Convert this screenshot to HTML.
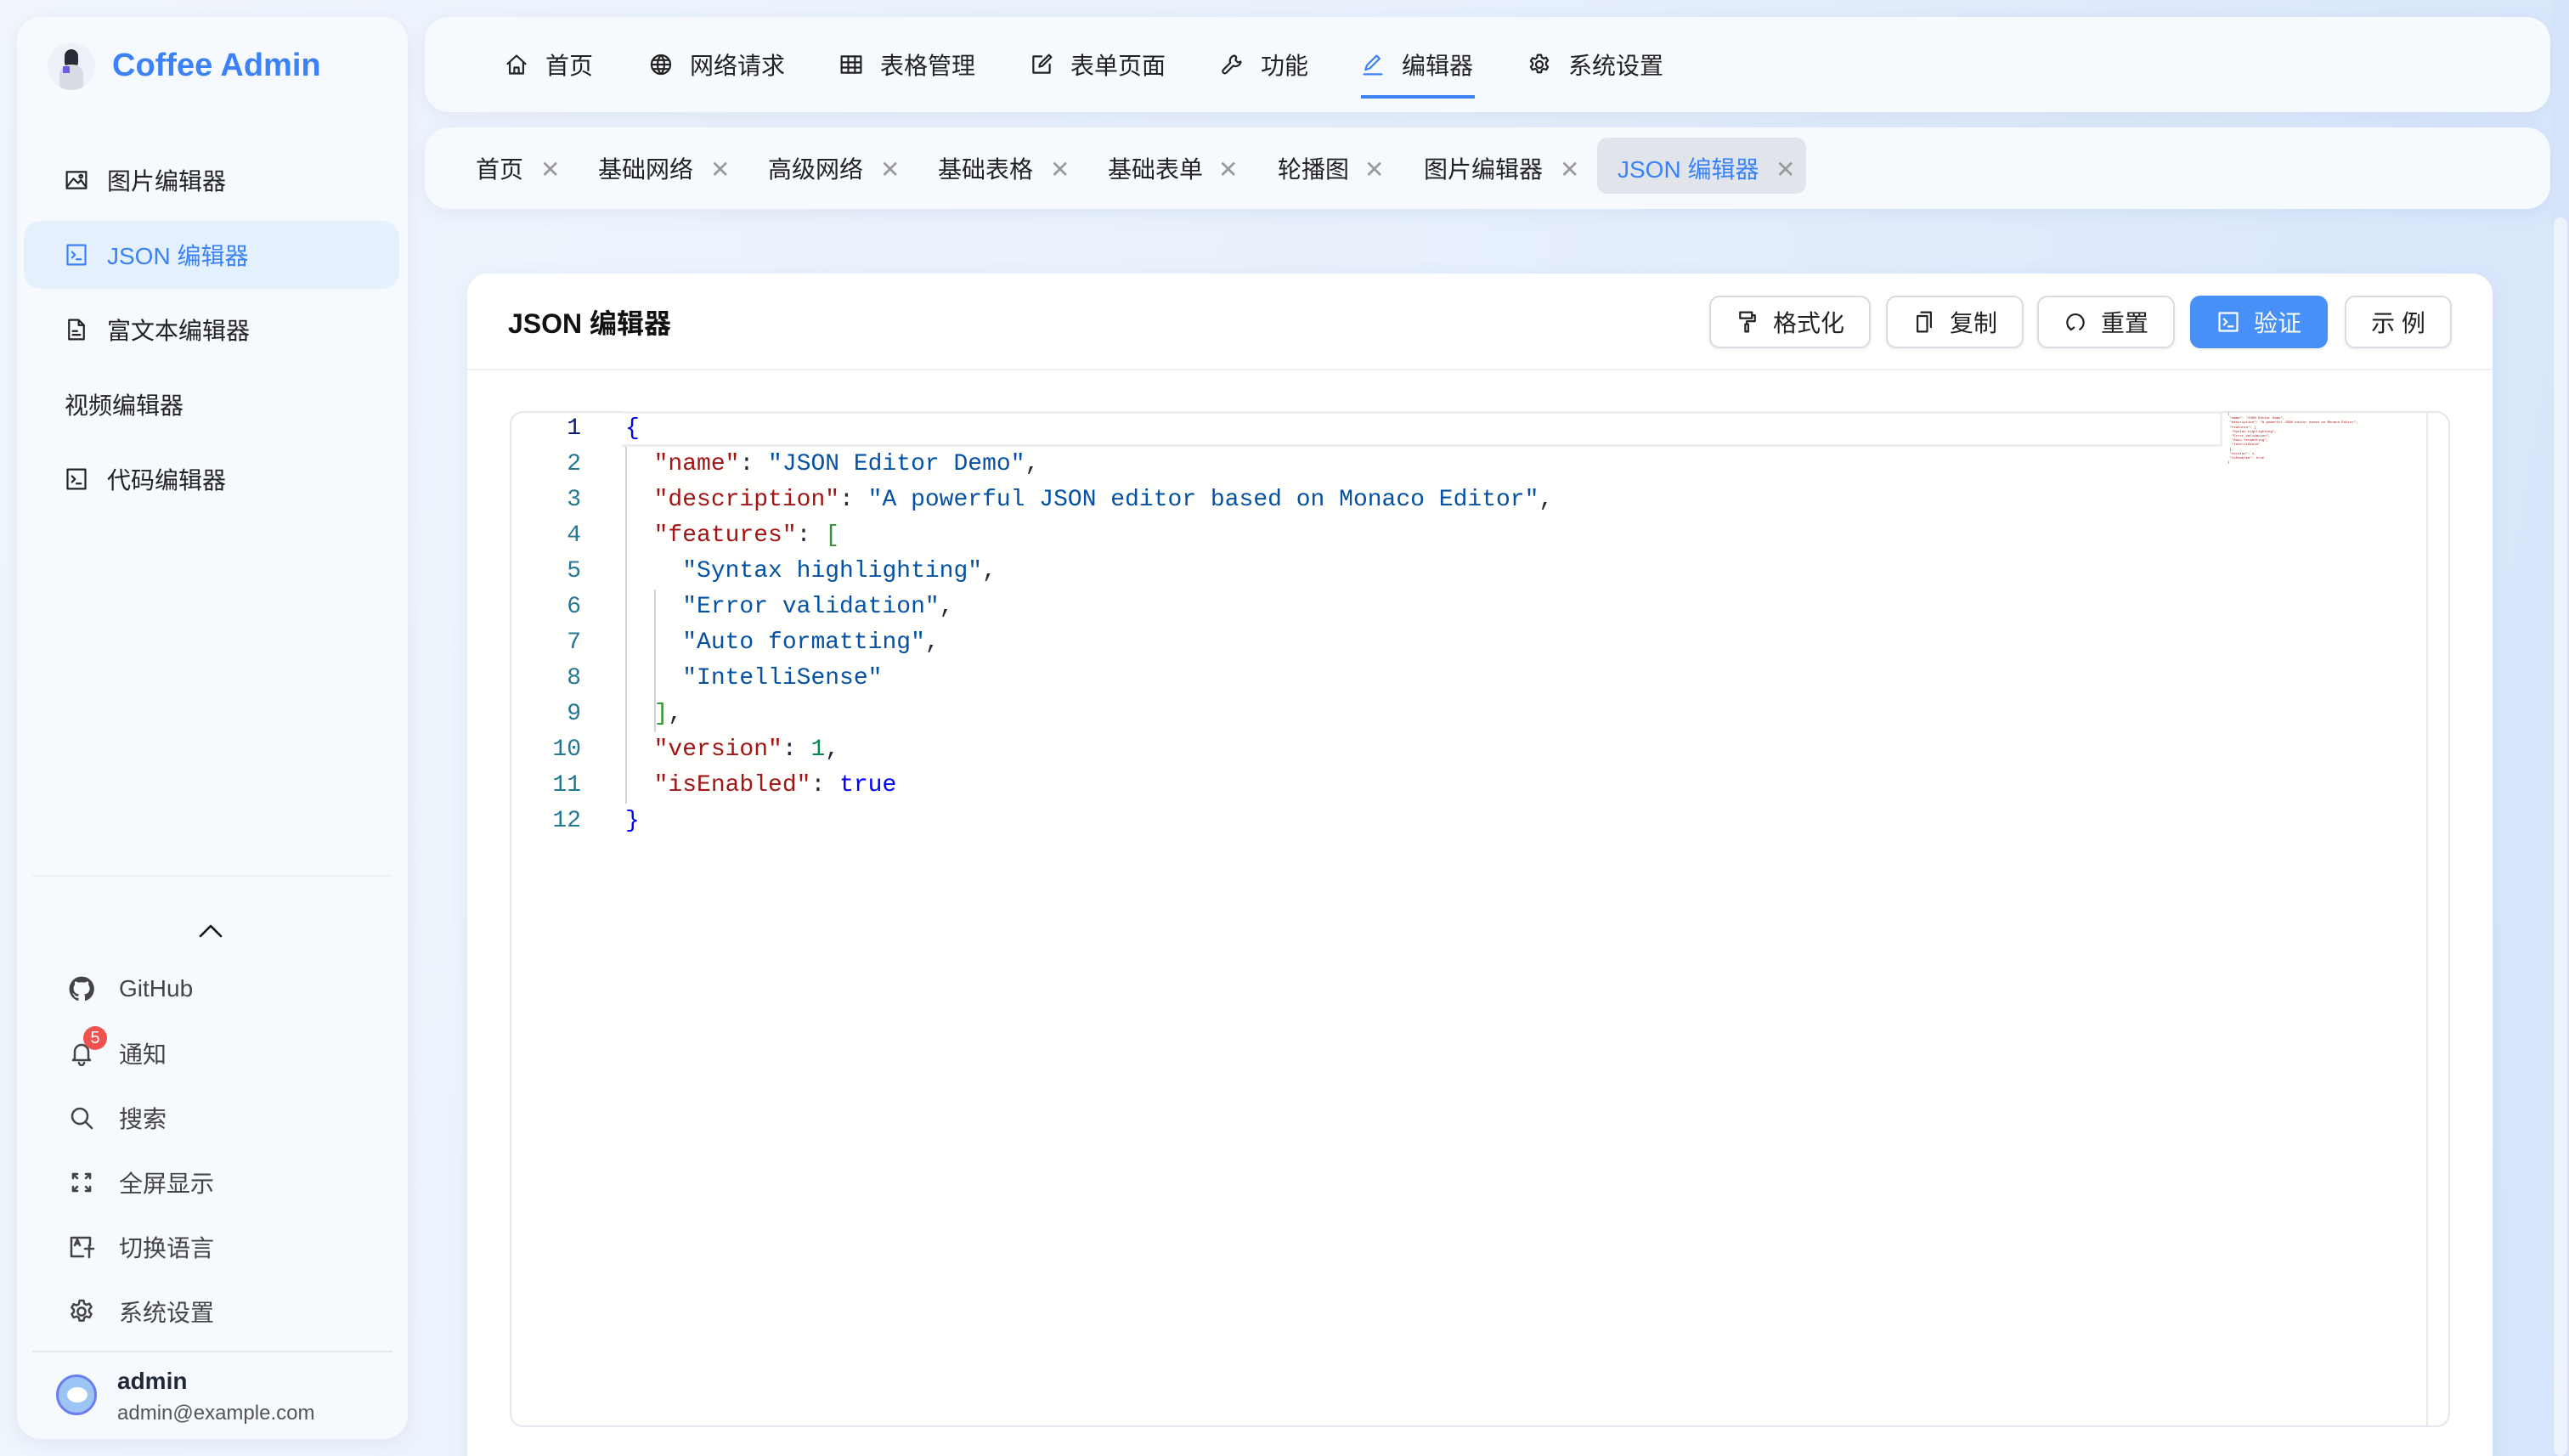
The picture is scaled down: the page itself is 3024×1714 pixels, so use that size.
<!DOCTYPE html>
<html><head><meta charset="utf-8"><style>
*{box-sizing:border-box;margin:0;padding:0}
html,body{width:3024px;height:1714px;overflow:hidden}
body{font-family:"Liberation Sans","Noto Sans CJK SC",sans-serif;color:#1f2937}
#w{zoom:2;width:1512px;height:857px;position:relative;overflow:hidden;background:linear-gradient(100deg,#f1f6fd 0%,#e8f0fc 50%,#d6e5fb 100%)}
.a{position:absolute}
.card{background:#f6f9fe;border-radius:14px;box-shadow:0 2px 10px rgba(100,130,180,.12)}
.mi{position:absolute;left:38px;font-size:14px;display:flex;align-items:center;height:20px;color:#222}
.mi svg{width:14px;height:14px;margin-right:11px}
.bi{position:absolute;left:40px;font-size:14px;display:flex;align-items:center;height:20px;color:#444}
.bi svg{width:16px;height:16px;margin-right:14px}
.nv{position:absolute;top:28px;font-size:14px;display:flex;align-items:center;height:20px;color:#222}
.nv svg{width:14px;height:14px;margin-right:10px}
.tb{position:absolute;top:90px;font-size:14px;height:20px;line-height:20px;color:#222}
.x{position:absolute;top:90px;font-size:14px;color:#999;height:20px;line-height:20px}
.btn{position:absolute;top:174px;height:31px;border:1px solid #d8dce2;border-radius:6px;background:#fff;font-size:14px;display:flex;align-items:center;justify-content:center;color:#222;box-shadow:0 1px 2px rgba(0,0,0,.06)}
.btn svg{width:14px;height:14px;margin-right:8px}
.code{position:absolute;left:368px;font-family:"Liberation Mono",monospace;font-size:14px;white-space:pre;line-height:21px}
.ln{position:absolute;left:300px;width:42px;text-align:right;font-family:"Liberation Mono",monospace;font-size:14px;line-height:21px;color:#237893}
.k{color:#a31515}.s{color:#0451a5}.n{color:#098658}.b{color:#0000ff}.g{color:#319331}
svg{fill:none;stroke:currentColor;stroke-width:1.25;stroke-linecap:round;stroke-linejoin:round}
</style></head><body><div id="w">

<div class="a card" style="left:10px;top:10px;width:230px;height:837px"></div>
<div class="a" style="left:28px;top:25px;width:28px;height:28px;border-radius:50%;background:#eef2f8;overflow:hidden">
 <div class="a" style="left:10px;top:4px;width:8px;height:10px;border-radius:4px 4px 2px 2px;background:#2b2b3a"></div>
 <div class="a" style="left:7px;top:13px;width:14px;height:15px;border-radius:6px 6px 0 0;background:#d8dbe3"></div>
 <div class="a" style="left:9px;top:14px;width:4px;height:4px;background:#6b5ce7"></div>
</div>
<div class="a" style="left:66px;top:28px;font-size:19px;font-weight:bold;color:#3b82f6">Coffee Admin</div>

<div class="a" style="left:14px;top:130px;width:221px;height:40px;border-radius:10px;background:#e5f0fd"></div>
<div class="mi" style="top:96px"><svg viewBox="0 0 16 16"><rect x="1.5" y="2.5" width="13" height="11"/><path d="M2 12l4-5 3 3 2-2 3 4"/><circle cx="11" cy="5.5" r="1"/></svg>图片编辑器</div>
<div class="mi" style="top:140px;color:#3b82f6"><svg viewBox="0 0 16 16"><rect x="2" y="1.5" width="12" height="13"/><path d="M5 6l2 2-2 2M8 11h3"/></svg>JSON 编辑器</div>
<div class="mi" style="top:184px"><svg viewBox="0 0 16 16"><path d="M3 1.5h6.5l3.5 3.5v9.5H3z M9.5 1.5V5H13 M5.5 9h3M5.5 11.5h5"/></svg>富文本编辑器</div>
<div class="mi" style="top:228px">视频编辑器</div>
<div class="mi" style="top:272px"><svg viewBox="0 0 16 16"><rect x="2" y="1.5" width="12" height="13"/><path d="M5 6l2 2-2 2M8 11h3"/></svg>代码编辑器</div>

<div class="a" style="left:19px;top:515px;width:212px;height:1px;background:#edf0f5"></div>
<svg class="a" style="left:117px;top:543px;width:14px;height:9px;stroke:#111;stroke-width:1.3" viewBox="0 0 14 9"><path d="M1 8l6-6 6 6"/></svg>

<div class="bi" style="top:572px"><svg viewBox="0 0 16 16" style="fill:#444;stroke:none"><path d="M8 .8a7.3 7.3 0 00-2.3 14.2c.4.1.5-.2.5-.4v-1.3c-2 .4-2.5-1-2.5-1-.3-.9-.8-1.1-.8-1.1-.7-.4 0-.4 0-.4.7 0 1.1.8 1.1.8.7 1.1 1.7.8 2.1.6.1-.5.3-.8.5-1-1.6-.2-3.3-.8-3.3-3.6 0-.8.3-1.4.8-1.9-.1-.2-.3-1 .1-2 0 0 .6-.2 2 .7a7 7 0 013.7 0c1.4-.9 2-.7 2-.7.4 1 .2 1.8.1 2 .5.5.8 1.1.8 1.900 0 2.8-1.7 3.4-3.3 3.6.3.2.5.7.5 1.4v2c0 .2.1.5.5.4A7.3 7.3 0 008 .8z"/></svg>GitHub</div>
<div class="bi" style="top:610px"><svg viewBox="0 0 16 16"><path d="M4 11V7a4 4 0 018 0v4l1 1H3zM6.5 13.5a1.5 1.5 0 003 0"/></svg>通知</div>
<div class="a" style="left:49px;top:604px;width:14px;height:14px;border-radius:50%;background:#ef5350;color:#fff;font-size:10px;text-align:center;line-height:14px">5</div>
<div class="bi" style="top:648px"><svg viewBox="0 0 16 16"><circle cx="7" cy="7" r="4.5"/><path d="M10.5 10.5l3.5 3.5"/></svg>搜索</div>
<div class="bi" style="top:686px"><svg viewBox="0 0 16 16"><path d="M3 3l2.5 2.5M3 5.5V3h2.5M13 3l-2.5 2.5M13 5.5V3h-2.5M3 13l2.5-2.5M3 10.5V13h2.5M13 13l-2.5-2.5M13 10.5V13h-2.5"/></svg>全屏显示</div>
<div class="bi" style="top:724px"><svg viewBox="0 0 16 16"><path d="M13 7V2.5H2v11h7M4 7l1.5-3.5L7 7M4.5 6h2M10 9h5M12.5 7v7"/></svg>切换语言</div>
<div class="bi" style="top:762px"><svg viewBox="0 0 16 16"><circle cx="8" cy="8" r="2.3"/><path d="M6.8 1.5h2.4l.4 1.8 1.3.7 1.7-.7 1.2 2-1.3 1.3v1.6l1.3 1.3-1.2 2-1.7-.7-1.3.7-.4 1.8H6.8l-.4-1.8-1.3-.7-1.7.7-1.2-2 1.3-1.3V6.9L2.2 5.6l1.2-2 1.7.7 1.3-.7z"/></svg>系统设置</div>

<div class="a" style="left:19px;top:795px;width:212px;height:1px;background:#e3e7ee"></div>
<div class="a" style="left:33px;top:809px;width:24px;height:24px;border-radius:50%;background:#9cc4f5;border:1.5px solid #6b7ef0">
 <div class="a" style="left:5px;top:6px;width:12px;height:9px;border-radius:50%;background:#fff"></div></div>
<div class="a" style="left:69px;top:805px;font-size:14px;font-weight:bold;color:#1f2937">admin</div>
<div class="a" style="left:69px;top:825px;font-size:12px;color:#555">admin@example.com</div>

<div class="a card" style="left:250px;top:10px;width:1251px;height:56px"></div>
<div class="nv" style="left:297px"><svg viewBox="0 0 16 16"><path d="M2 7.5L8 2l6 5.5M3.5 6.5V14h9V6.5M6.5 14v-4h3v4"/></svg>首页</div>
<div class="nv" style="left:382px"><svg viewBox="0 0 16 16"><circle cx="8" cy="8" r="6.3"/><path d="M1.7 8h12.6M8 1.7c-3 3-3 9.6 0 12.6M8 1.7c3 3 3 9.6 0 12.6M2.5 5h11M2.5 11h11"/></svg>网络请求</div>
<div class="nv" style="left:494px"><svg viewBox="0 0 16 16"><rect x="1.5" y="2.5" width="13" height="11"/><path d="M1.5 6.5h13M1.5 10h13M6 2.5v11M10.5 2.5v11"/></svg>表格管理</div>
<div class="nv" style="left:606px"><svg viewBox="0 0 16 16"><path d="M8 2.5H2.5v11h11V8M6.5 9.5l.5-2 6-6 1.5 1.5-6 6z"/></svg>表单页面</div>
<div class="nv" style="left:718px"><svg viewBox="0 0 16 16"><path d="M10 2a3.5 3.5 0 00-3 4.8L2.3 11.5a1.3 1.3 0 002 2L9 8.8A3.5 3.5 0 0014 6l-2 .5-1.5-1.5.5-2z"/></svg>功能</div>
<div class="nv" style="left:801px;color:#222"><svg viewBox="0 0 16 16" style="color:#3b82f6"><path d="M3 11.5l1-3 6.5-6.5 2 2L6 10.5zM2 14.5h12"/></svg>编辑器</div>
<div class="a" style="left:801px;top:56px;width:67px;height:2px;background:#3b82f6"></div>
<div class="nv" style="left:899px"><svg viewBox="0 0 16 16"><circle cx="8" cy="8" r="2.3"/><path d="M6.8 1.5h2.4l.4 1.8 1.3.7 1.7-.7 1.2 2-1.3 1.3v1.6l1.3 1.3-1.2 2-1.7-.7-1.3.7-.4 1.8H6.8l-.4-1.8-1.3-.7-1.7.7-1.2-2 1.3-1.3V6.9L2.2 5.6l1.2-2 1.7.7 1.3-.7z"/></svg>系统设置</div>

<div class="a card" style="left:250px;top:75px;width:1251px;height:48px"></div>
<div class="a" style="left:940px;top:81px;width:123px;height:33px;border-radius:6px;background:#e1e5eb"></div>
<div class="tb" style="left:280px">首页</div><div class="x" style="left:318px">✕</div>
<div class="tb" style="left:352px">基础网络</div><div class="x" style="left:418px">✕</div>
<div class="tb" style="left:452px">高级网络</div><div class="x" style="left:518px">✕</div>
<div class="tb" style="left:552px">基础表格</div><div class="x" style="left:618px">✕</div>
<div class="tb" style="left:652px">基础表单</div><div class="x" style="left:717px">✕</div>
<div class="tb" style="left:752px">轮播图</div><div class="x" style="left:803px">✕</div>
<div class="tb" style="left:838px">图片编辑器</div><div class="x" style="left:918px">✕</div>
<div class="tb" style="left:952px;color:#3b82f6">JSON 编辑器</div><div class="x" style="left:1045px">✕</div>

<div class="a" style="left:275px;top:161px;width:1192px;height:720px;background:#fff;border-radius:12px;box-shadow:0 2px 10px rgba(100,130,180,.1)"></div>
<div class="a" style="left:275px;top:217px;width:1192px;height:1px;background:#eef0f3"></div>
<div class="a" style="left:299px;top:178px;font-size:16px;font-weight:bold;color:#111">JSON 编辑器</div>

<div class="btn" style="left:1006px;width:95px"><svg viewBox="0 0 16 16"><path d="M3 1.5h8v4H3zM11 3.5h2v4H7.5v2M6.5 9.5h2v5h-2z"/></svg>格式化</div>
<div class="btn" style="left:1110px;width:81px"><svg viewBox="0 0 16 16"><path d="M6 1.5h6.5v10M3.5 4h6.5v10.5H3.5z"/></svg>复制</div>
<div class="btn" style="left:1199px;width:81px"><svg viewBox="0 0 16 16"><path d="M5 13A5.5 5.5 0 1111 13"/><path d="M3 11l2 2.2 2-1.5"/></svg>重置</div>
<div class="btn" style="left:1289px;width:81px;background:#4690f7;border-color:#4690f7;color:#fff"><svg viewBox="0 0 16 16"><rect x="2" y="2" width="12" height="12"/><path d="M5 6l2 2-2 2M8 11h3"/></svg>验证</div>
<div class="btn" style="left:1380px;width:63px">示 例</div>

<div class="a" style="left:300px;top:242px;width:1142px;height:598px;border:1px solid #e4e7eb;border-radius:8px;background:#fffffe"></div>
<div class="a" style="left:366px;top:242px;width:942px;height:21px;border:1.5px solid #eeeeee;border-left:none"></div>
<div class="a" style="left:1428px;top:243px;width:1px;height:596px;background:#eaeaea"></div>
<div class="a" style="left:368px;top:263px;width:1px;height:210px;background:#d3d3d3"></div>
<div class="a" style="left:385px;top:347px;width:1px;height:84px;background:#d3d3d3"></div>

<div class="ln" style="top:242px"><span style="color:#0b216f">1</span><br>2<br>3<br>4<br>5<br>6<br>7<br>8<br>9<br>10<br>11<br>12</div>
<div class="code" style="top:242px"><span class="b">{</span>
  <span class="k">"name"</span>: <span class="s">"JSON Editor Demo"</span>,
  <span class="k">"description"</span>: <span class="s">"A powerful JSON editor based on Monaco Editor"</span>,
  <span class="k">"features"</span>: <span class="g">[</span>
    <span class="s">"Syntax highlighting"</span>,
    <span class="s">"Error validation"</span>,
    <span class="s">"Auto formatting"</span>,
    <span class="s">"IntelliSense"</span>
  <span class="g">]</span>,
  <span class="k">"version"</span>: <span class="n">1</span>,
  <span class="k">"isEnabled"</span>: <span class="b">true</span>
<span class="b">}</span></div>

<div class="a" style="left:1311px;top:243px;font-family:'Liberation Mono',monospace;font-size:2px;line-height:2.6px;white-space:pre;color:#a31515">{
 "name": "JSON Editor Demo",
 "description": "A powerful JSON editor based on Monaco Editor",
 "features": [
  "Syntax highlighting",
  "Error validation",
  "Auto formatting",
  "IntelliSense"
 ],
 "version": 1,
 "isEnabled": true
}</div>

<div class="a" style="left:1502px;top:0;width:10px;height:857px;background:#d5e3f8"></div>
<div class="a" style="left:1503px;top:128px;width:8px;height:729px;background:#eef3fb;border-radius:4px"></div>
</div></body></html>
